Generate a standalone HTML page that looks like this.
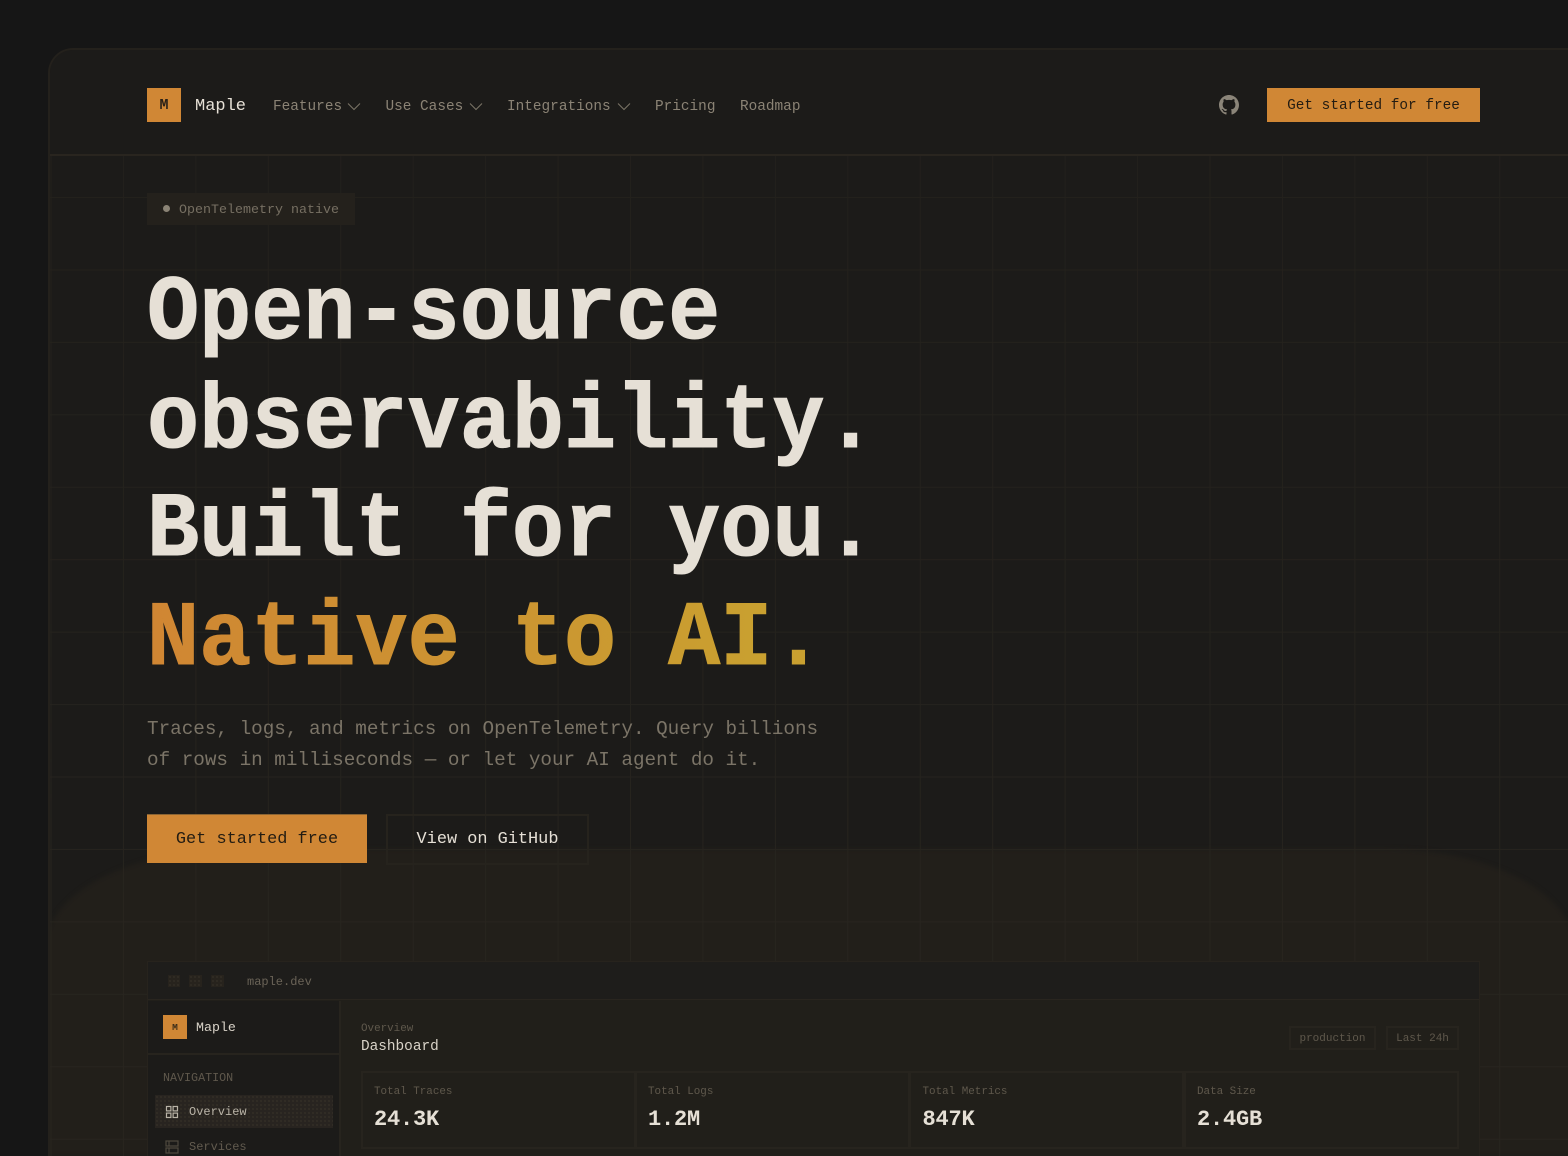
<!DOCTYPE html>
<html lang="en">
<head>
<meta charset="utf-8">
<title>Maple</title>
<style>
html,body{margin:0;padding:0;background:#161616;width:1568px;height:1156px;overflow:hidden;}
#root{position:relative;width:1568px;height:1156px;overflow:hidden;font-family:"Liberation Mono",monospace;}
*{box-sizing:border-box;}
.a{position:absolute;white-space:pre;}
#frame{position:absolute;left:48px;top:48px;width:1520px;height:1108px;background:#1c1b19;border:2px solid #24211c;border-right:0;border-bottom:0;border-radius:25px 0 0 0;overflow:hidden;}
#glow{position:absolute;left:-5px;top:799px;width:1530px;height:307px;border-radius:190px 190px 0 0/100px 100px 0 0;background:#221f1a;filter:blur(2px);}
#grid{position:absolute;left:0;top:105px;width:1518px;height:1001px;
background-image:linear-gradient(to right,#28251f 1px,transparent 1px),linear-gradient(to bottom,#28251f 1px,transparent 1px);
background-size:72.45px 72.45px;background-position:0.5px 42px;
-webkit-mask-image:linear-gradient(to bottom,rgba(0,0,0,.6),rgba(0,0,0,.8) 55%,#000 75%);mask-image:linear-gradient(to bottom,rgba(0,0,0,.6),rgba(0,0,0,.8) 55%,#000 75%);
}
#hdr{position:absolute;left:0;top:0;width:1518px;height:106px;background:#1c1b19;border-bottom:2px solid #29251f;}
.nav{font-size:14.4px;line-height:20px;color:#8b8375;top:96.5px;}
.chev{position:absolute;top:102px;}
h1{margin:0;font-weight:700;font-size:92px;line-height:108.6px;position:absolute;left:147px;top:260px;color:#e6e0d6;transform:scaleX(.944);transform-origin:0 0;-webkit-text-stroke:1px #e6e0d6;}
h1 span{display:block;white-space:pre;}
h1 .gr{background:linear-gradient(90deg,#d08633 0%,#c9a030 90%);background-size:720px 100%;-webkit-background-clip:text;background-clip:text;color:transparent;-webkit-text-stroke:1px transparent;}
.p{font-size:19.3px;line-height:31px;color:#7b7467;left:147px;}
.dots{background-image:radial-gradient(circle,#3a352b 0.6px,transparent 0.9px);background-size:4px 4px;}
#mock{position:absolute;left:147px;top:961px;width:1333px;height:195px;border:1px solid #27231d;border-bottom:0;background:#211f1a;}
.stat{position:absolute;top:1071px;height:78px;width:275px;border:2px solid #27241e;}
.lbl{font-size:10.9px;line-height:14px;color:#5f584c;top:1085px;}
.val{font-size:22px;font-weight:700;line-height:26px;color:#e6e0d6;top:1107px;letter-spacing:-.2px;}
.chip{position:absolute;top:1026px;height:24px;border:2px solid #27241e;font-size:11px;line-height:22px;color:#5f584c;text-align:center;white-space:pre;}
</style>
</head>
<body>
<div id="root">
<div id="frame">
  <div id="glow"></div>
  <div id="grid"></div>
  <div id="hdr"></div>
</div>

<!-- header -->
<div class="a" style="left:147px;top:88px;width:34px;height:34px;background:#d08735;color:#2a2118;font-weight:700;font-size:15px;line-height:36px;text-align:center;">M</div>
<div class="a" style="left:195px;top:97px;font-size:17px;line-height:20px;color:#e6e0d6;">Maple</div>
<div class="a nav" style="left:273px;">Features</div>
<svg class="chev" style="left:347px;" width="14" height="9" viewBox="0 0 14 9" fill="none" stroke="#7c7567" stroke-width="1"><path d="M1 1.5l6 6 6-6"/></svg>
<div class="a nav" style="left:385.5px;">Use Cases</div>
<svg class="chev" style="left:469px;" width="14" height="9" viewBox="0 0 14 9" fill="none" stroke="#7c7567" stroke-width="1"><path d="M1 1.5l6 6 6-6"/></svg>
<div class="a nav" style="left:507px;">Integrations</div>
<svg class="chev" style="left:617px;" width="14" height="9" viewBox="0 0 14 9" fill="none" stroke="#7c7567" stroke-width="1"><path d="M1 1.5l6 6 6-6"/></svg>
<div class="a nav" style="left:655px;">Pricing</div>
<div class="a nav" style="left:740px;">Roadmap</div>
<svg class="a" style="left:1219px;top:95px;" width="20" height="20" viewBox="0 0 16 16" fill="#8b8579"><path d="M8 0C3.58 0 0 3.58 0 8c0 3.54 2.29 6.53 5.47 7.59.4.07.55-.17.55-.38 0-.19-.01-.82-.01-1.49-2.01.37-2.53-.49-2.69-.94-.09-.23-.48-.94-.82-1.13-.28-.15-.68-.52-.01-.53.63-.01 1.08.58 1.23.82.72 1.21 1.87.87 2.33.66.07-.52.28-.87.51-1.07-1.78-.2-3.64-.89-3.64-3.95 0-.87.31-1.59.82-2.15-.08-.2-.36-1.02.08-2.12 0 0 .67-.21 2.2.82.64-.18 1.32-.27 2-.27s1.36.09 2 .27c1.53-1.04 2.2-.82 2.2-.82.44 1.1.16 1.92.08 2.12.51.56.82 1.27.82 2.15 0 3.07-1.87 3.75-3.65 3.95.29.25.54.73.54 1.48 0 1.07-.01 1.93-.01 2.2 0 .21.15.46.55.38A8.01 8.01 0 0 0 16 8c0-4.42-3.58-8-8-8z"/></svg>
<div class="a" style="left:1267px;top:88px;width:213px;height:34px;background:#d08735;color:#231c12;font-size:14.4px;line-height:36px;text-align:center;">Get started for free</div>

<!-- badge -->
<div class="a" style="left:147px;top:193px;width:208px;height:32px;background:#24211c;"></div>
<div class="a" style="left:162.5px;top:205px;width:7px;height:7px;border-radius:50%;background:#8a8375;"></div>
<div class="a" style="left:179px;top:203px;font-size:13.33px;line-height:16px;color:#766f62;">OpenTelemetry native</div>

<!-- hero -->
<h1><span>Open-source</span><span>observability.</span><span>Built for you.</span><span class="gr">Native to AI.</span></h1>
<div class="a p" style="top:714px;">Traces, logs, and metrics on OpenTelemetry. Query billions</div>
<div class="a p" style="top:745px;">of rows in milliseconds — or let your AI agent do it.</div>
<div class="a" style="left:147px;top:814px;width:220px;height:49px;background:#d08735;border-top:1px solid #8a6434;color:#231c12;font-size:16.9px;line-height:49px;text-align:center;overflow:hidden;">Get started free</div>
<div class="a" style="left:386px;top:814px;width:203px;height:51px;border:2px solid #26231d;color:#e6e0d6;font-size:16.9px;line-height:47px;text-align:center;">View on GitHub</div>

<!-- app mock -->
<div id="mock"></div>
<div class="a" style="left:148px;top:962px;width:1331px;height:38px;background:#1e1d1b;border-bottom:1px solid #29251f;"></div>
<div class="a dots" style="left:168px;top:975px;width:12px;height:12px;background-color:#27231d;"></div>
<div class="a dots" style="left:189px;top:975px;width:13px;height:12px;background-color:#27231d;"></div>
<div class="a dots" style="left:211px;top:975px;width:13px;height:12px;background-color:#27231d;"></div>
<div class="a" style="left:247px;top:974px;font-size:12px;line-height:16px;color:#6a6357;">maple.dev</div>
<div class="a" style="left:148px;top:1001px;width:193px;height:155px;background:#1c1b19;border-right:2px solid #27241e;"></div>
<div class="a" style="left:148px;top:1053px;width:191px;height:2px;background:#27241e;"></div>
<div class="a" style="left:163px;top:1015px;width:24px;height:24px;background:#d08735;color:#3a2c18;font-size:9.5px;font-weight:700;line-height:25px;text-align:center;">M</div>
<div class="a" style="left:196px;top:1020px;font-size:13.3px;line-height:16px;color:#d9d3c8;">Maple</div>
<div class="a" style="left:163px;top:1071px;font-size:11.7px;line-height:14px;color:#5f584c;">NAVIGATION</div>
<div class="a dots" style="left:155px;top:1095px;width:178px;height:33px;background-color:#282420;"></div>
<svg class="a" style="left:165px;top:1105px;" width="14" height="14" viewBox="0 0 14 14" fill="none" stroke="#b9b3a7" stroke-width="1.2"><rect x="1.5" y="1.5" width="4.4" height="4.4"/><rect x="8.1" y="1.5" width="4.4" height="4.4"/><rect x="1.5" y="8.1" width="4.4" height="4.4"/><rect x="8.1" y="8.1" width="4.4" height="4.4"/></svg>
<div class="a" style="left:189px;top:1104px;font-size:12px;line-height:16px;color:#b9b3a7;">Overview</div>
<svg class="a" style="left:165px;top:1140px;" width="14" height="14" viewBox="0 0 14 14" fill="none" stroke="#4f493e" stroke-width="1.2"><rect x="1" y="1" width="12" height="5"/><rect x="1" y="8" width="12" height="5"/><path d="M4 1v5M4 8v5"/></svg>
<div class="a" style="left:189px;top:1139px;font-size:12px;line-height:16px;color:#625b4f;">Services</div>

<div class="a" style="left:361px;top:1022px;font-size:10.9px;line-height:14px;color:#5f584c;">Overview</div>
<div class="a" style="left:361px;top:1038px;font-size:14.4px;line-height:18px;color:#d9d3c8;">Dashboard</div>
<div class="chip" style="left:1289px;width:87px;">production</div>
<div class="chip" style="left:1386px;width:73px;">Last 24h</div>

<div class="stat" style="left:361px;"></div>
<div class="stat" style="left:635px;"></div>
<div class="stat" style="left:909px;"></div>
<div class="stat" style="left:1184px;"></div>
<div class="a lbl" style="left:374px;">Total Traces</div>
<div class="a val" style="left:374px;">24.3K</div>
<div class="a lbl" style="left:648px;">Total Logs</div>
<div class="a val" style="left:648px;">1.2M</div>
<div class="a lbl" style="left:922.5px;">Total Metrics</div>
<div class="a val" style="left:922.5px;">847K</div>
<div class="a lbl" style="left:1197px;">Data Size</div>
<div class="a val" style="left:1197px;">2.4GB</div>
</div>
</body>
</html>
